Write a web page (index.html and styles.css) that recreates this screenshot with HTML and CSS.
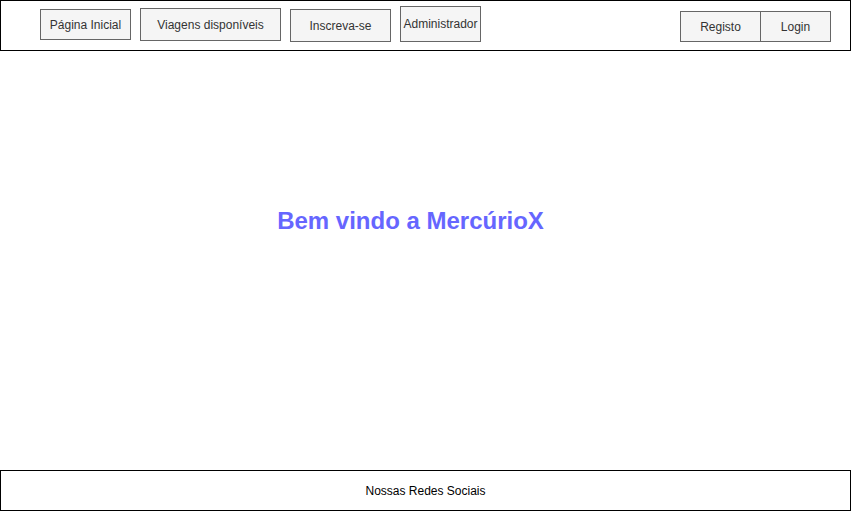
FILE: index.html
```html
<!DOCTYPE html>
<html lang="pt">
<head>
<meta charset="utf-8">
<title>MercúrioX</title>
<link rel="stylesheet" href="styles.css">
</head>
<body>
<header class="topbar">
  <nav class="nav">
    <a class="btn btn-home" href="#">Página Inicial</a>
    <a class="btn btn-trips" href="#">Viagens disponíveis</a>
    <a class="btn btn-signup" href="#">Inscreva-se</a>
    <a class="btn btn-admin" href="#">Administrador</a>
  </nav>
  <div class="auth">
    <a class="btn btn-register" href="#">Registo</a>
    <a class="btn btn-login" href="#">Login</a>
  </div>
</header>
<main class="main">
  <h1 class="title">Bem vindo a MercúrioX</h1>
</main>
<footer class="footer">Nossas Redes Sociais</footer>
</body>
</html>
```
FILE: styles.css
```css
* { box-sizing: border-box; }
html, body { margin: 0; padding: 0; background: #ffffff; }
body {
  width: 851px;
  height: 511px;
  font-family: "Liberation Sans", Arial, sans-serif;
  font-size: 12px;
  color: #000;
  overflow: hidden;
}
.topbar {
  display: flex;
  align-items: flex-start;
  width: 851px;
  height: 51px;
  border: 1px solid #000;
  padding: 0 19px 0 39px;
}
.nav {
  display: flex;
  align-items: flex-start;
  gap: 9px;
}
.auth {
  display: flex;
  margin-left: auto;
  margin-top: 10px;
}
.btn {
  display: flex;
  align-items: center;
  justify-content: center;
  background: #f5f5f5;
  border: 1px solid #666666;
  color: #333333;
  text-decoration: none;
  font-size: 12px;
  line-height: 14px;
  white-space: nowrap;
}
.btn-home { width: 91px; height: 31px; margin-top: 8px; }
.btn-trips { width: 141px; height: 33px; margin-top: 7px; }
.btn-signup { width: 101px; height: 33px; margin-top: 8px; }
.btn-admin { width: 81px; height: 36px; margin-top: 5px; }
.btn-register { width: 81px; height: 31px; }
.btn-login { width: 71px; height: 31px; border-left: none; width: 70px; }
.main {
  height: 419px;
  padding: 156px 30px 0 0;
}
.title {
  margin: 0;
  text-align: center;
  font-size: 24px;
  line-height: 28px;
  font-weight: bold;
  color: #6666ff;
}
.footer {
  display: flex;
  align-items: center;
  justify-content: center;
  width: 851px;
  height: 41px;
  border: 1px solid #000;
  font-size: 12px;
  color: #000;
}
```
